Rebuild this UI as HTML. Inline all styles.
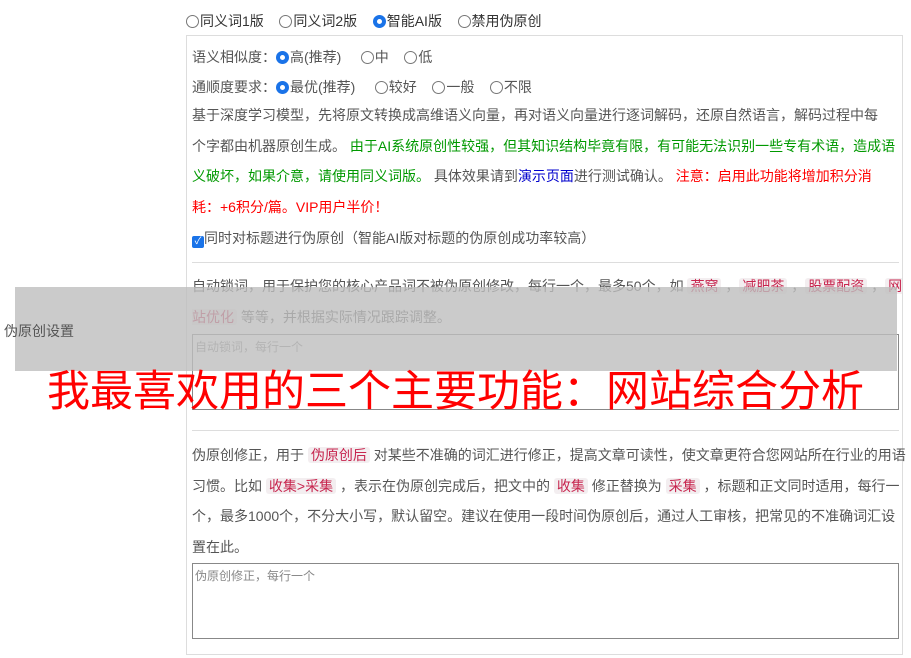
<!DOCTYPE html>
<html><head><meta charset="utf-8"><style>
body{margin:0;width:911px;height:658px;background:#fff;font-family:"Liberation Sans","Noto Sans CJK SC",sans-serif;font-size:14px;color:#555;position:relative;overflow:hidden}
.a{position:absolute;white-space:nowrap}
.r{display:inline-block;width:13px;height:13px;border:1px solid #777;border-radius:50%;vertical-align:-2px;box-sizing:border-box;margin-right:1px}
.r.on{border:4px solid #1a73e8;background:#fff}
.box{position:absolute;left:186px;top:35px;width:717px;height:620px;border:1px solid #ddd;box-sizing:border-box}
.p{position:absolute;left:192px;width:720px;line-height:30.5px;white-space:nowrap}
.t{background:#f3eef0;color:#c7254e;padding:0 3px;border-radius:3px}
.ta{position:absolute;left:192px;width:707px;border:1px solid #888;box-sizing:border-box;font-size:12px;color:#888;padding:3px 2px}
</style></head><body>
<div class="a" style="left:186px;top:11px;color:#333">
<span class="r"></span>同义词1版&nbsp;&nbsp;&nbsp;&nbsp;<span class="r"></span>同义词2版&nbsp;&nbsp;&nbsp;&nbsp;<span class="r on"></span>智能AI版&nbsp;&nbsp;&nbsp;&nbsp;<span class="r"></span>禁用伪原创</div>
<div class="box"></div>
<div class="a" style="left:192px;top:47px">语义相似度：<span class="r on"></span>高(推荐)&nbsp;&nbsp;&nbsp;&nbsp;&nbsp;<span class="r"></span>中&nbsp;&nbsp;&nbsp;&nbsp;<span class="r"></span>低</div>
<div class="a" style="left:192px;top:77px">通顺度要求：<span class="r on"></span>最优(推荐)&nbsp;&nbsp;&nbsp;&nbsp;&nbsp;<span class="r"></span>较好&nbsp;&nbsp;&nbsp;&nbsp;<span class="r"></span>一般&nbsp;&nbsp;&nbsp;&nbsp;<span class="r"></span>不限</div>
<div class="p" style="top:100px">基于深度学习模型，先将原文转换成高维语义向量，再对语义向量进行逐词解码，还原自然语言，解码过程中每<br>个字都由机器原创生成。 <span style="color:#090">由于AI系统原创性较强，但其知识结构毕竟有限，有可能无法识别一些专有术语，造成语<br>义破坏，如果介意，请使用同义词版。</span> 具体效果请到<span style="color:#00c">演示页面</span>进行测试确认。 <span style="color:#f00">注意：启用此功能将增加积分消<br>耗：+6积分/篇。VIP用户半价！</span></div>
<div class="a" style="left:192px;top:228px"><span style="display:inline-block;width:12px;height:12px;background:#1a73e8;border-radius:2px;vertical-align:-1px;color:#fff;font-size:10px;line-height:12px;text-align:center">✓</span>同时对标题进行伪原创（智能AI版对标题的伪原创成功率较高）</div>
<div class="a" style="left:192px;top:262px;width:707px;border-top:1px solid #ddd"></div>
<div class="p" style="top:271px">自动锁词，用于保护您的核心产品词不被伪原创修改，每行一个，最多50个，如 <span class="t">燕窝</span> ，<span class="t">减肥茶</span> ，<span class="t">股票配资</span> ，<span class="t">网<br>站优化</span> 等等，并根据实际情况跟踪调整。</div>
<div class="ta" style="top:334px;height:76px">自动锁词，每行一个</div>
<div class="a" style="left:15px;top:287px;width:882px;height:84px;background:rgba(190,190,190,.8)"></div>
<div class="a" style="left:4px;top:321px">伪原创设置</div>
<div class="a" style="left:47px;top:365px;font-size:43px;color:#f00;line-height:54px">我最喜欢用的三个主要功能：网站综合分析</div>
<div class="a" style="left:192px;top:430px;width:707px;border-top:1px solid #ddd"></div>
<div class="p" style="top:440px">伪原创修正，用于 <span class="t">伪原创后</span> 对某些不准确的词汇进行修正，提高文章可读性，使文章更符合您网站所在行业的用语<br>习惯。比如 <span class="t">收集&gt;采集</span> ，表示在伪原创完成后，把文中的 <span class="t">收集</span> 修正替换为 <span class="t">采集</span> ，标题和正文同时适用，每行一<br>个，最多1000个，不分大小写，默认留空。建议在使用一段时间伪原创后，通过人工审核，把常见的不准确词汇设<br>置在此。</div>
<div class="ta" style="top:563px;height:76px">伪原创修正，每行一个</div>
</body></html>
